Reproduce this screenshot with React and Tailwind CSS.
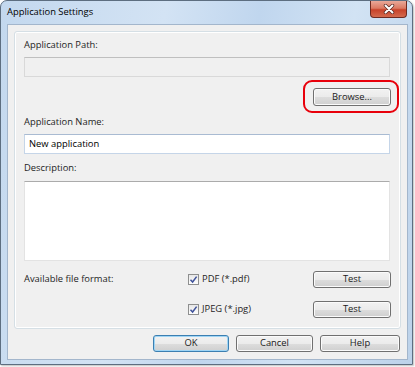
import React from "react";

const font = { fontFamily: '"Open Sans", "Noto Sans", sans-serif' };

function Btn({ children, def = false, className = "" }) {
  return (
    <div
      className={
        "flex items-center justify-center rounded-[3px] border text-[9.4px] text-[#1a1a1a] " +
        (def
          ? "border-[#3c7fb1] shadow-[inset_0_0_0_1px_#9fd5f5] "
          : "border-[#707070] shadow-[inset_0_0_0_1px_#fbfbfb] ") +
        "bg-[linear-gradient(to_bottom,#f2f2f2_0%,#ebebeb_50%,#dddddd_51%,#cfcfcf_100%)] " +
        className
      }
    >
      {children}
    </div>
  );
}

function Check() {
  return (
    <div className="flex h-[11px] w-[11px] items-center justify-center border border-[#8e8f8f] bg-[linear-gradient(to_bottom,#e8e8e8,#fdfdfd)]">
      <svg width="9" height="9" viewBox="0 0 9 9">
        <path d="M1.5 4.8 L3.6 7 L7.6 1.6" fill="none" stroke="#3e519a" strokeWidth="1.5" />
      </svg>
    </div>
  );
}

export default function App() {
  return (
    <div className="h-[367px] w-[415px] bg-white" style={font}>
      <div className="flex h-[365px] w-[413px] flex-col rounded-t-[7px] border border-[#5d6e80] bg-[linear-gradient(100deg,#c3d8ee_0%,#d3e3f4_35%,#c0d6ee_55%,#d2e3f4_75%,#bcd2ea_100%)] pb-[4px] pl-[6px] pr-[4px] shadow-[1px_1px_2px_rgba(0,0,0,0.25)]">
        <div className="flex h-[23px] items-start justify-between">
          <div className="pt-[4px] text-[9.4px] leading-[14px] text-black">Application Settings</div>
          <div className="mr-[1px] flex h-[17px] w-[37px] items-center justify-center rounded-b-[4px] border border-t-0 border-[#6e2a20] bg-[linear-gradient(to_bottom,#e9a899_0%,#dc7a63_45%,#c8432a_55%,#d36a4e_100%)]">
            <svg width="12" height="10" viewBox="0 0 12 10">
              <path d="M2.5 1.5 L9.5 8.5 M9.5 1.5 L2.5 8.5" stroke="#5a2a24" strokeWidth="3.4" strokeLinecap="round" />
              <path d="M2.5 1.5 L9.5 8.5 M9.5 1.5 L2.5 8.5" stroke="#ffffff" strokeWidth="2" strokeLinecap="round" />
            </svg>
          </div>
        </div>
        <div className="flex flex-1 flex-col border border-[#a3b6cc] bg-[#f0f0f0] px-[6px] pt-[6px]">
          <div className="flex h-[298px] flex-col rounded-[3px] border border-[#d5dfe5] pl-[9px] pr-[10px] pt-[6px] shadow-[inset_0_0_0_1px_#ffffff]">
            <div className="h-[14px] text-[9.4px] leading-[14px] text-[#1e1e1e]">Application Path:</div>
            <div className="mt-[5px] h-[20px] border border-[#d9d9d9] border-t-[#bfbfbf] bg-[#f0f0f0]" />
            <div className="mt-[11px] flex justify-end">
              <div className="relative mr-[-1px]">
                <Btn className="h-[18px] w-[78px]">Browse...</Btn>
                <span className="absolute -bottom-[7px] -left-[10px] -right-[8px] -top-[8px] rounded-[9px] border-2 border-[#e8000b]" />
              </div>
            </div>
            <div className="mt-[9px] h-[14px] text-[9.4px] leading-[14px] text-[#1e1e1e]">Application Name:</div>
            <div className="mt-[5px] flex h-[20px] items-center border border-[#c5d5e8] border-t-[#a9bbd2] bg-white pl-[4px] text-[9.4px] text-black">
              New application
            </div>
            <div className="mt-[7px] h-[14px] text-[9.4px] leading-[14px] text-[#1e1e1e]">Description:</div>
            <div className="mt-[6px] h-[80px] border border-[#e3e3e3] border-t-[#ababab] bg-white" />
            <div className="mt-[10px] flex h-[17px] items-center text-[9.4px] text-[#1e1e1e]">
              <div className="w-[164px]">Available file format:</div>
              <div className="flex flex-1 items-center gap-[3px]">
                <Check />
                <span>PDF (*.pdf)</span>
              </div>
              <Btn className="mr-[-1px] h-[17px] w-[78px]">Test</Btn>
            </div>
            <div className="mt-[13px] flex h-[17px] items-center text-[9.4px] text-[#1e1e1e]">
              <div className="w-[164px]" />
              <div className="flex flex-1 items-center gap-[3px]">
                <Check />
                <span>JPEG (*.jpg)</span>
              </div>
              <Btn className="mr-[-1px] h-[17px] w-[78px]">Test</Btn>
            </div>
          </div>
          <div className="mt-[6px] flex justify-end gap-[7px] pr-[1px]">
            <Btn def className="h-[17px] w-[76px]">OK</Btn>
            <Btn className="h-[17px] w-[77px]">Cancel</Btn>
            <Btn className="h-[17px] w-[80px]">Help</Btn>
          </div>
        </div>
      </div>
    </div>
  );
}
